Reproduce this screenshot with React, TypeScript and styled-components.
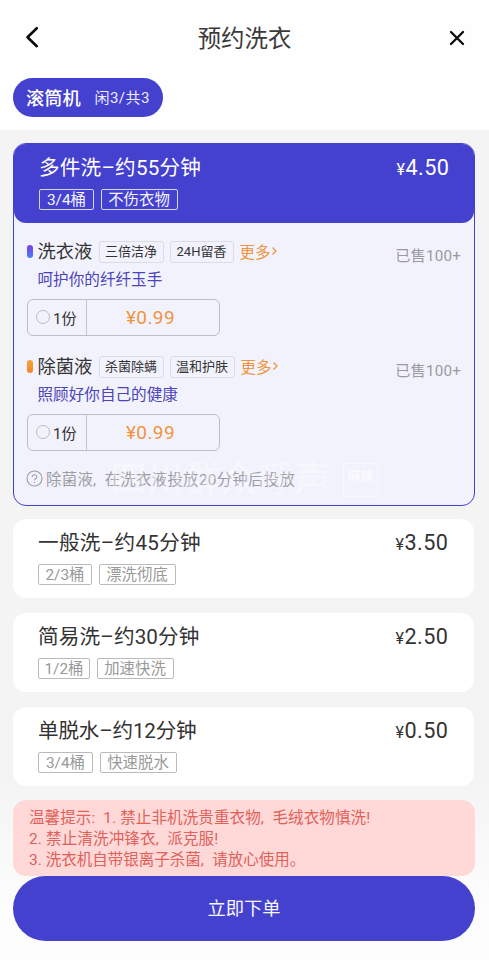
import React from "react";
import styled, { createGlobalStyle } from "styled-components";

const PURPLE = "#4541cf";
const ORANGE = "#f0953f";

const GlobalStyle = createGlobalStyle`
  * { box-sizing: border-box; }
  body {
    margin: 0;
    background: #f4f4f5;
    font-family: Roboto, "Noto Sans CJK SC", sans-serif;
    color: #333;
  }
`;

const Page = styled.div`
  width: 489px;
  height: 960px;
  overflow: hidden;
  display: flex;
  flex-direction: column;
  background: linear-gradient(#f4f4f5 0, #f4f4f5 780px, #fdfdfd 910px);
`;

const Top = styled.header`
  height: 130px;
  flex: none;
  padding: 0 13px;
  background: #fefefe;
`;

const NavBar = styled.div`
  height: 78px;
  padding: 0 9px 3px 9px;
  display: flex;
  align-items: center;
  justify-content: space-between;
`;

const Title = styled.h1`
  margin: 0;
  padding-top: 2px;
  font-size: 23.4px;
  line-height: 32px;
  font-weight: 400;
  color: #3a3a3a;
`;

const IconButton = styled.button`
  width: 20px;
  height: 28px;
  border: 0;
  padding: 0;
  background: none;
  display: grid;
  place-items: center;
  color: #0a0a0a;
`;

const MachineTab = styled.button`
  width: 150px;
  height: 39px;
  border: 0;
  border-radius: 20px;
  padding: 0 13px 2px;
  background: ${PURPLE};
  color: #fff;
  display: flex;
  align-items: center;
  justify-content: space-between;
  font-family: inherit;
  white-space: nowrap;
`;

const MachineName = styled.span`
  font-size: 18.2px;
  font-weight: 500;
`;

const MachineCount = styled.span`
  font-size: 15px;
  letter-spacing: 0.5px;
  color: #ededff;
`;

const List = styled.main`
  flex: none;
  padding: 13px 15px 0 13px;
  display: flex;
  flex-direction: column;
`;

const SelectedCard = styled.section`
  position: relative;
  height: 363px;
  border: 1.5px solid ${PURPLE};
  border-radius: 13px;
  background: #f2f2fd;
  overflow: hidden;
  margin-right: -1px;
  margin-bottom: 13px;
`;

const Plan = styled.article`
  height: 79px;
  margin-bottom: 15px;
  border-radius: 13px;
  background: #fff;
  padding: 10px 26px 0 25px;

  &:last-of-type { margin-bottom: 14px; }
`;

const SelectedHead = styled.div`
  height: 79px;
  border-radius: 0 0 12px 12px;
  background: ${PURPLE};
  color: #fff;
  padding: 10px 25px 0;
`;

const PlanLine = styled.div`
  display: flex;
  justify-content: space-between;
  height: 28px;
  line-height: 28px;
  white-space: nowrap;
`;

const PlanName = styled.h2<{ $gap: number }>`
  margin: 0;
  font-size: 20.6px;
  font-weight: 400;
  letter-spacing: ${(p) => p.$gap}px;
`;

const Price = styled.span`
  font-size: 21.6px;
  letter-spacing: 0.5px;
  margin-right: -0.5px;
  small { font-size: 16px; }
`;

const Tags = styled.div`
  display: flex;
  gap: 6.5px;
  margin-top: 7px;
`;

const Tag = styled.span<{ $light?: boolean; $w: number }>`
  width: ${(p) => p.$w}px;
  height: 21px;
  line-height: 21px;
  border: 1px solid ${(p) => (p.$light ? "#d5d4fb" : "#bababa")};
  border-radius: 2px;
  color: ${(p) => (p.$light ? "#f3f3ff" : "#999")};
  font-size: 15.4px;
  text-align: center;
  white-space: nowrap;
`;

const AddOn = styled.div`
  height: 115px;
  padding: 16px 13px 0 12.5px;
  display: flex;
  justify-content: space-between;
`;

const AddOnInfo = styled.div`
  display: flex;
  flex-direction: column;
`;

const AddOnLine = styled.div`
  height: 25px;
  display: flex;
  align-items: center;
  white-space: nowrap;
`;

const Marker = styled.i<{ $from: string; $to: string }>`
  width: 6px;
  height: 13px;
  border-radius: 3px;
  margin-right: 5px;
  background: linear-gradient(${(p) => p.$from}, ${(p) => p.$to});
`;

const AddOnName = styled.span`
  font-size: 18.3px;
  width: 61px;
  line-height: 27px;
`;

const Chip = styled.span<{ $w: number }>`
  width: ${(p) => p.$w}px;
  height: 22px;
  line-height: 20px;
  margin-right: 6px;
  border: 1px solid #dcdce8;
  border-radius: 3px;
  font-size: 13px;
  text-align: center;
`;

const More = styled.a`
  display: flex;
  align-items: center;
  color: ${ORANGE};
  font-size: 15.4px;
  padding-bottom: 2px;
  svg { margin-left: 1px; }
`;

const Slogan = styled.div`
  margin: 5px 0 0 11px;
  height: 22px;
  line-height: 22px;
  font-size: 15.6px;
  color: #4b44b8;
  white-space: nowrap;
`;

const Sold = styled.span`
  font-size: 15.2px;
  letter-spacing: 0.2px;
  line-height: 22px;
  margin-top: 6px;
  color: #9a9aa0;
  white-space: nowrap;
`;

const Picker = styled.div`
  margin-top: 8px;
  width: 193px;
  height: 37px;
  border: 1px solid #bdbdc8;
  border-radius: 6px;
  display: flex;
`;

const Quantity = styled.label`
  width: 59px;
  border-right: 1px solid #c5c5ce;
  display: flex;
  align-items: center;
  gap: 3.5px;
  padding: 0 0 2px 8px;
  font-size: 15.2px;
  white-space: nowrap;
`;

const Radio = styled.span`
  width: 14px;
  height: 14px;
  border: 1px solid #bbbbc5;
  border-radius: 50%;
`;

const PickerPrice = styled.span`
  flex: 1;
  text-align: center;
  padding-right: 4px;
  line-height: 35px;
  font-size: 19px;
  letter-spacing: 0.4px;
  color: ${ORANGE};
`;

const Hint = styled.div`
  height: 24px;
  padding-left: 12px;
  margin-top: 13px;
  display: flex;
  align-items: center;
  gap: 3px;
  font-size: 15.4px;
  letter-spacing: 0.3px;
  color: #9c9ca3;
  white-space: nowrap;
`;

const Punctuation = styled.span<{ $tight: boolean }>`
  display: inline-block;
  width: ${(p) => (p.$tight ? 0.5 : 0.75)}em;
`;

const Watermark = styled.div`
  position: absolute;
  left: 96px;
  top: 318px;
  display: flex;
  align-items: center;
  gap: 12px;
  font-size: 36.8px;
  line-height: 36px;
  font-weight: 500;
  color: rgba(255, 255, 255, 0.32);
  white-space: nowrap;
  pointer-events: none;
`;

const Stamp = styled.span`
  width: 35px;
  height: 34px;
  border: 1px solid rgba(255, 255, 255, 0.4);
  border-radius: 2px;
  font-size: 13px;
  line-height: 24px;
  text-align: center;
  color: rgba(255, 255, 255, 0.7);
`;

const Notice = styled.aside`
  height: 76px;
  margin-right: -1px;
  border-radius: 13px;
  background: #fed9d8;
  color: #e0605a;
  padding: 8px 16px 0;
  font-size: 15.5px;
  line-height: 21px;
  white-space: nowrap;
`;

const NoticeLine = styled.div<{ $gap: number }>`
  letter-spacing: ${(p) => p.$gap}px;
`;

const Submit = styled.button`
  flex: none;
  width: 462px;
  height: 65px;
  margin-left: 13px;
  padding: 0 0 3px;
  border: 0;
  border-radius: 33px;
  background: ${PURPLE};
  color: #f7f7ff;
  font-family: inherit;
  font-size: 18.3px;
`;

function withPunctuation(text: string) {
  return text.split(/([,:])/).map((part, i) =>
    /^[,:]$/.test(part) ? <Punctuation key={i} $tight={part === ":"}>{part}</Punctuation> : part
  );
}

type PlanData = { name: string; gap: number; price: string; tags: [string, number][] };

const selected: PlanData = {
  name: "多件洗–约55分钟", gap: 0.2, price: "4.50",
  tags: [["3/4桶", 55], ["不伤衣物", 77]],
};

const plans: PlanData[] = [
  { name: "一般洗–约45分钟", gap: 0.3, price: "3.50", tags: [["2/3桶", 54], ["漂洗彻底", 77]] },
  { name: "简易洗–约30分钟", gap: 0.15, price: "2.50", tags: [["1/2桶", 52], ["加速快洗", 77]] },
  { name: "单脱水–约12分钟", gap: -0.2, price: "0.50", tags: [["3/4桶", 55], ["快速脱水", 77]] },
];

const addOns = [
  { name: "洗衣液", from: "#7a3fe6", to: "#4a7cf5", chips: [["三倍洁净", 65], ["24H留香", 64]] as [string, number][], slogan: "呵护你的纤纤玉手" },
  { name: "除菌液", from: "#f5a53c", to: "#f38328", chips: [["杀菌除螨", 65], ["温和护肤", 65]] as [string, number][], slogan: "照顾好你自己的健康" },
];

function PlanContent({ plan, light }: { plan: PlanData; light?: boolean }) {
  return (
    <>
      <PlanLine>
        <PlanName $gap={plan.gap}>{plan.name}</PlanName>
        <Price><small>¥</small>{plan.price}</Price>
      </PlanLine>
      <Tags>
        {plan.tags.map(([text, w]) => <Tag key={text} $w={w} $light={light}>{text}</Tag>)}
      </Tags>
    </>
  );
}

export default function App() {
  return (
    <Page>
      <GlobalStyle />
      <Top>
        <NavBar>
          <IconButton aria-label="返回">
            <svg width="18" height="24" viewBox="0 0 18 24" fill="none" stroke="currentColor" strokeWidth="2.6" strokeLinecap="round" strokeLinejoin="round">
              <path d="M13.8 2.2 4.5 11.2l9.3 9" />
            </svg>
          </IconButton>
          <Title>预约洗衣</Title>
          <IconButton aria-label="关闭">
            <svg width="16" height="16" viewBox="0 0 16 16" fill="none" stroke="currentColor" strokeWidth="2.3" strokeLinecap="round">
              <path d="m2 2 12 12M14 2 2 14" />
            </svg>
          </IconButton>
        </NavBar>
        <MachineTab>
          <MachineName>滚筒机</MachineName>
          <MachineCount>闲3/共3</MachineCount>
        </MachineTab>
      </Top>
      <List>
        <SelectedCard>
          <SelectedHead><PlanContent plan={selected} light /></SelectedHead>
          {addOns.map((a) => (
            <AddOn key={a.name}>
              <AddOnInfo>
                <AddOnLine>
                  <Marker $from={a.from} $to={a.to} />
                  <AddOnName>{a.name}</AddOnName>
                  {a.chips.map(([text, w]) => <Chip key={text} $w={w}>{text}</Chip>)}
                  <More>
                    更多
                    <svg width="7" height="10" viewBox="0 0 7 10" fill="none" stroke="currentColor" strokeWidth="1.3">
                      <path d="m1.5 1.5 3.5 3.5-3.5 3.5" />
                    </svg>
                  </More>
                </AddOnLine>
                <Slogan>{a.slogan}</Slogan>
                <Picker>
                  <Quantity><Radio />1份</Quantity>
                  <PickerPrice>¥0.99</PickerPrice>
                </Picker>
              </AddOnInfo>
              <Sold>已售100+</Sold>
            </AddOn>
          ))}
          <Hint>
            <svg width="17" height="17" viewBox="0 0 17 17" fill="none" stroke="currentColor" strokeWidth="1.1">
              <circle cx="8.5" cy="8.5" r="7.5" />
              <path d="M6.2 6.9a2.3 2.1 0 1 1 3.4 1.8c-.8.45-1.1.8-1.1 1.5M8.5 11.7v1.2" />
            </svg>
            <span>{withPunctuation("除菌液,在洗衣液投放20分钟后投放")}</span>
          </Hint>
          <Watermark>四川群众呼声<Stamp>麻辣</Stamp></Watermark>
        </SelectedCard>
        {plans.map((p) => <Plan key={p.name}><PlanContent plan={p} /></Plan>)}
        <Notice>
          <NoticeLine $gap={0.12}>{withPunctuation("温馨提示: 1. 禁止非机洗贵重衣物,毛绒衣物慎洗!")}</NoticeLine>
          <NoticeLine $gap={0.15}>{withPunctuation("2. 禁止清洗冲锋衣,派克服!")}</NoticeLine>
          <NoticeLine $gap={0}>{withPunctuation("3. 洗衣机自带银离子杀菌,请放心使用。")}</NoticeLine>
        </Notice>
      </List>
      <Submit>立即下单</Submit>
    </Page>
  );
}
